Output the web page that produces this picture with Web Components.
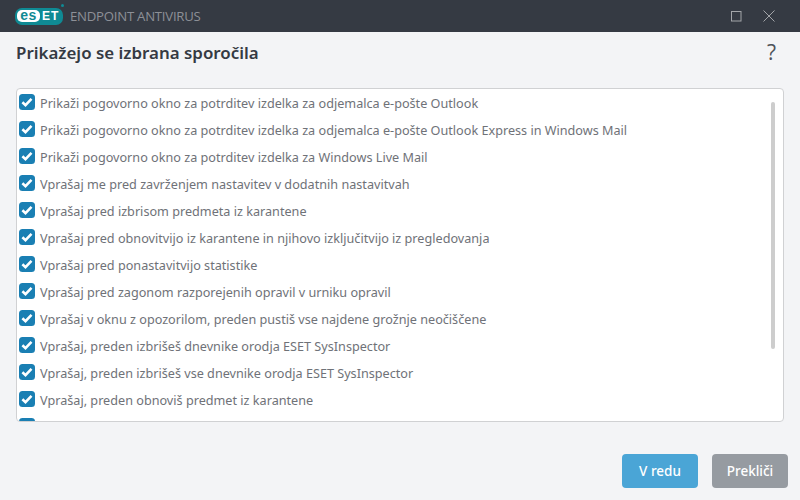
<!DOCTYPE html>
<html>
<head>
<meta charset="utf-8">
<title>ESET Endpoint Antivirus</title>
<style>
  html, body { margin: 0; height: 100%; }
  body { font-family: "Noto Sans", "Open Sans", sans-serif; background: #f3f4f6; }
  app-window { height: 500px; }
</style>
</head>
<body>
<app-window>
  <title-bar slot="bar" product="ENDPOINT ANTIVIRUS"></title-bar>
  <page-head slot="head">Prikažejo se izbrana sporočila</page-head>
  <check-list slot="body">
    <check-row>Prikaži pogovorno okno za potrditev izdelka za odjemalca e-pošte Outlook</check-row>
    <check-row>Prikaži pogovorno okno za potrditev izdelka za odjemalca e-pošte Outlook Express in Windows Mail</check-row>
    <check-row>Prikaži pogovorno okno za potrditev izdelka za Windows Live Mail</check-row>
    <check-row>Vprašaj me pred zavrženjem nastavitev v dodatnih nastavitvah</check-row>
    <check-row>Vprašaj pred izbrisom predmeta iz karantene</check-row>
    <check-row>Vprašaj pred obnovitvijo iz karantene in njihovo izključitvijo iz pregledovanja</check-row>
    <check-row>Vprašaj pred ponastavitvijo statistike</check-row>
    <check-row>Vprašaj pred zagonom razporejenih opravil v urniku opravil</check-row>
    <check-row>Vprašaj v oknu z opozorilom, preden pustiš vse najdene grožnje neočiščene</check-row>
    <check-row>Vprašaj, preden izbrišeš dnevnike orodja ESET SysInspector</check-row>
    <check-row>Vprašaj, preden izbrišeš vse dnevnike orodja ESET SysInspector</check-row>
    <check-row>Vprašaj, preden obnoviš predmet iz karantene</check-row>
    <check-row></check-row>
  </check-list>
  <action-button slot="foot" kind="primary">V redu</action-button>
  <action-button slot="foot" kind="muted">Prekliči</action-button>
</app-window>

<script>
class AppWindow extends HTMLElement {
  constructor() {
    super();
    this.attachShadow({ mode: 'open' });
    this.shadowRoot.innerHTML = `
      <style>
        :host { display: flex; flex-direction: column; }
        .body { flex: 1; min-height: 0; display: flex; padding: 0 16px; }
        .foot { display: flex; justify-content: flex-end; gap: 14px; padding: 32px 12px 12px 0; }
      </style>
      <slot name="bar"></slot>
      <slot name="head"></slot>
      <div class="body"><slot name="body"></slot></div>
      <div class="foot"><slot name="foot"></slot></div>`;
  }
}

class TitleBar extends HTMLElement {
  constructor() {
    super();
    this.attachShadow({ mode: 'open' });
  }
  connectedCallback() {
    this.shadowRoot.innerHTML = `
      <style>
        :host { display: flex; align-items: center; height: 32px; background: #353a43; padding-left: 15px; }
        .logo { display: flex; align-items: center; height: 17px; width: 48px; box-sizing: border-box; background: #0f8a94; border-radius: 7px; padding: 0 2px; position: relative;
                font: 700 13px/17px "Liberation Sans", sans-serif; color: #fff; }
        .es { display: flex; justify-content: center; background: #fff; color: #0f8a94; border-radius: 5px; height: 12px; line-height: 11px; width: 23px; font-size: 14px; letter-spacing: .5px; }
        .et { margin-left: 2px; font-size: 12px; letter-spacing: 1px; }
        .dot { position: absolute; right: -1px; top: -4px; width: 3px; height: 3px; border-radius: 50%; background: #0f8a94; }
        .name { margin-left: 7px; font: 400 13.2px "Open Sans", sans-serif; color: #8d9097; letter-spacing: -.25px; flex: 1; }
        .ctl { display: flex; align-items: center; }
        .ctl svg { display: block; }
      </style>
      <div class="logo"><span class="es">es</span><span class="et">ET</span><span class="dot"></span></div>
      <div class="name">${this.getAttribute('product')}</div>
      <div class="ctl">
        <svg width="11" height="11" viewBox="0 0 11 11" style="margin-right:21px"><rect x=".5" y=".5" width="9.5" height="9.5" fill="none" stroke="#a3a5a9"/></svg>
        <svg width="12" height="12" viewBox="0 0 12 12" style="margin-right:25px"><path d="M.5.5l11 11M11.5.5l-11 11" fill="none" stroke="#a3a5a9" stroke-width="1"/></svg>
      </div>`;
  }
}

class PageHead extends HTMLElement {
  constructor() {
    super();
    this.attachShadow({ mode: 'open' });
    this.shadowRoot.innerHTML = `
      <style>
        :host { display: flex; align-items: center; justify-content: space-between; height: 40px; padding: 0 24px 0 16px; margin-bottom: 16px; }
        .t { font-size: 16.9px; font-weight: 600; color: #353a43; }
        .q { font: 400 21px "Open Sans", sans-serif; color: #4d525a; }
      </style>
      <div class="t"><slot></slot></div>
      <div class="q">?</div>`;
  }
}

class CheckList extends HTMLElement {
  constructor() {
    super();
    this.attachShadow({ mode: 'open' });
    this.shadowRoot.innerHTML = `
      <style>
        :host { display: block; flex: 1; min-width: 0; box-sizing: border-box; height: 334px; background: #fff; border: 1px solid #d0d1d3; border-radius: 4px; overflow: hidden; position: relative; }
        .rows { display: flex; flex-direction: column; gap: 7px; padding: 4px 0 0 2px; }
        .thumb { position: absolute; right: 8px; top: 13px; width: 4px; height: 247px; border-radius: 2px; background: #cdcdcd; }
      </style>
      <div class="rows"><slot></slot></div>
      <div class="thumb"></div>`;
  }
}

class CheckRow extends HTMLElement {
  constructor() {
    super();
    this.attachShadow({ mode: 'open' });
    this.shadowRoot.innerHTML = `
      <style>
        :host { display: flex; align-items: center; gap: 5px; height: 20px; font-size: 12.65px; color: #6f7278; white-space: nowrap; }
        svg { flex: none; display: block; margin-bottom: 2px; }
      </style>
      <svg width="16" height="16" viewBox="0 0 16 16"><rect width="16" height="16" rx="3.5" fill="#1a7fb3"/><path d="M3.4 8.2l3.1 2.9 6-6.3" fill="none" stroke="#fff" stroke-width="2.6"/></svg>
      <span><slot></slot></span>`;
  }
}

class ActionButton extends HTMLElement {
  constructor() {
    super();
    this.attachShadow({ mode: 'open' });
  }
  connectedCallback() {
    const bg = this.getAttribute('kind') === 'primary' ? '#4aa5d6' : '#969ba1';
    this.shadowRoot.innerHTML = `
      <style>
        :host { display: flex; align-items: center; justify-content: center; width: 76px; height: 34px; border-radius: 4px; background: ${bg}; color: #fff; font-size: 13.5px; font-weight: 500; }
      </style>
      <slot></slot>`;
  }
}

customElements.define('app-window', AppWindow);
customElements.define('title-bar', TitleBar);
customElements.define('page-head', PageHead);
customElements.define('check-list', CheckList);
customElements.define('check-row', CheckRow);
customElements.define('action-button', ActionButton);
</script>
</body>
</html>
